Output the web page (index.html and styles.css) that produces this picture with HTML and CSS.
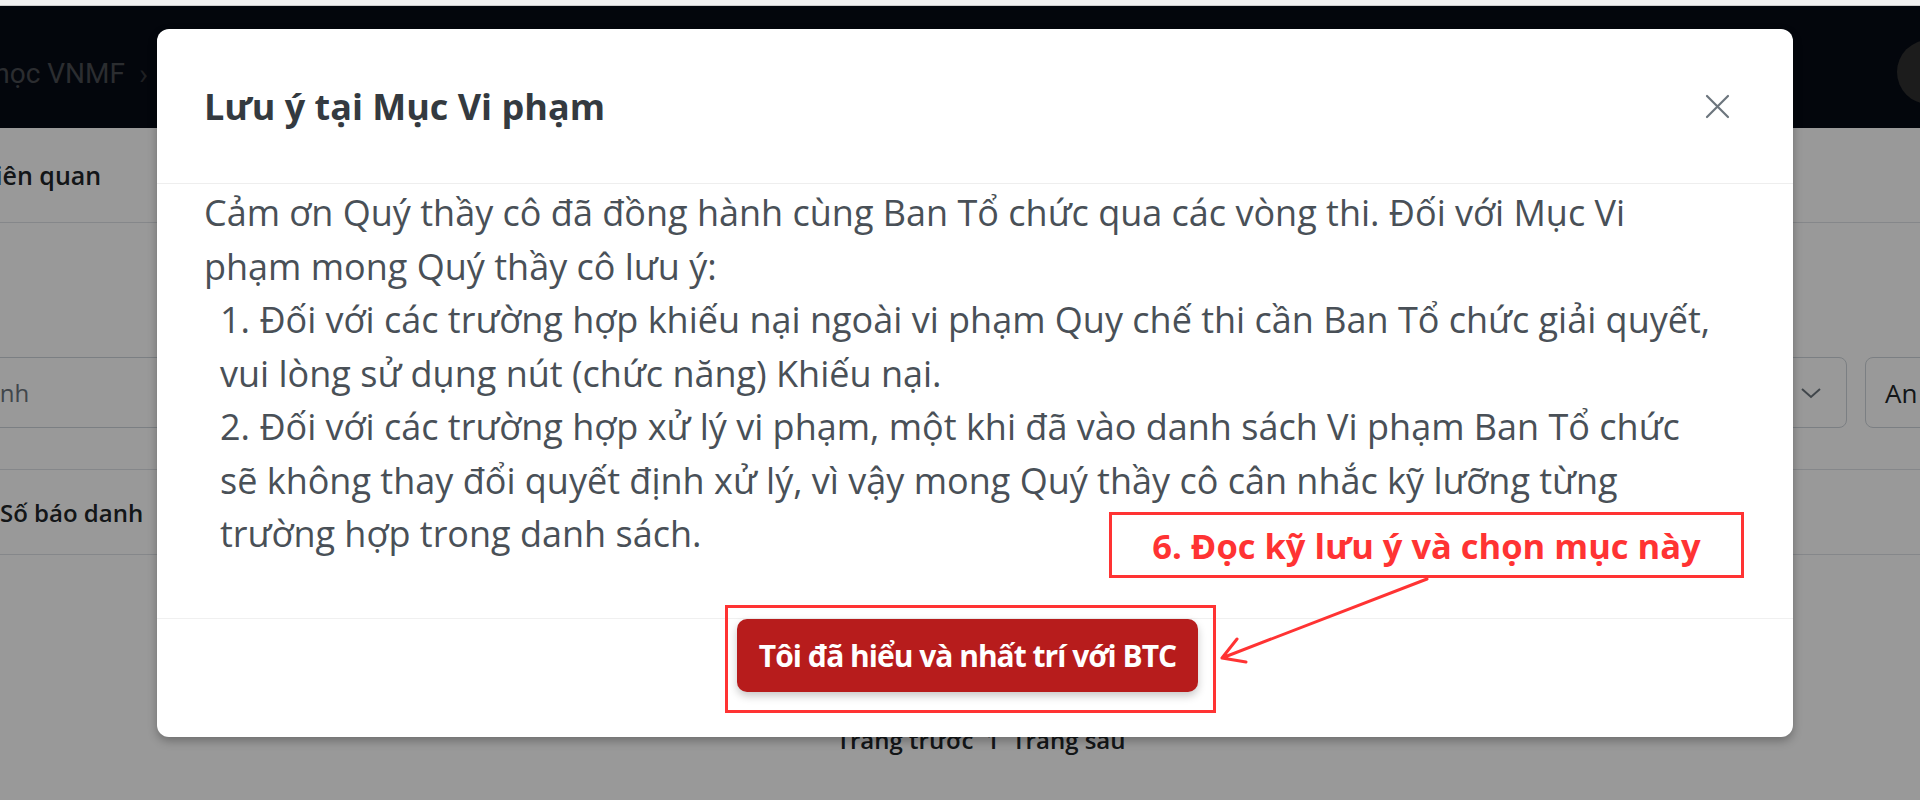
FILE: index.html
```html
<!DOCTYPE html>
<html lang="vi">
  <head>
    <meta charset="UTF-8" />
    <meta name="viewport" content="width=device-width, initial-scale=1.0" />
    <title>Danh sách Vi phạm</title>
    <link rel="stylesheet" href="styles.css">
  </head>
  <body>
    <div class="browser-bar"></div>

    <div class="app">
      <header class="topbar">
        <nav class="crumbs">
          <span>Kỳ thi Olympic Toán học VNMF</span>
          <span class="crumb-sep">›</span>
        </nav>
        <div class="avatar"></div>
      </header>

      <main class="content">
        <div class="tabs">
          <span class="tab">Liên quan</span>
        </div>

        <div class="filters">
          <div class="field search">Nhập số báo danh</div>
          <div class="field select">
            <svg width="22" height="12" viewBox="0 0 22 12">
              <polyline points="2,2 11,10 20,2" fill="none" stroke="#6c757d" stroke-width="2" />
            </svg>
          </div>
          <button class="btn-outline">An</button>
        </div>

        <div class="table-head">
          <span class="th">Số báo danh</span>
        </div>

        <div class="pager">Trang trước &nbsp;1&nbsp; Trang sau</div>
      </main>

      <div class="backdrop"></div>

      <div class="modal">
        <div class="modal-header">
          <h5 class="modal-title">Lưu ý tại Mục Vi phạm</h5>
          <button class="btn-close" aria-label="Close">
            <svg width="25" height="25" viewBox="0 0 25 25">
              <path d="M2 2 L23 23 M23 2 L2 23" stroke="#6c757d" stroke-width="2.2" stroke-linecap="round" />
            </svg>
          </button>
        </div>
        <div class="modal-body">
          <p>Cảm ơn Quý thầy cô đã đồng hành cùng Ban Tổ chức qua các vòng thi. Đối với Mục Vi<br>phạm mong Quý thầy cô lưu ý:</p>
          <div class="rules">
            <p>1. Đối với các trường hợp khiếu nại ngoài vi phạm Quy chế thi cần Ban Tổ chức giải quyết,<br>vui lòng sử dụng nút (chức năng) Khiếu nại.</p>
            <p>2. Đối với các trường hợp xử lý vi phạm, một khi đã vào danh sách Vi phạm Ban Tổ chức<br>sẽ không thay đổi quyết định xử lý, vì vậy mong Quý thầy cô cân nhắc kỹ lưỡng từng<br>trường hợp trong danh sách.</p>
          </div>
        </div>
        <div class="modal-footer">
          <button class="btn-agree">Tôi đã hiểu và nhất trí với BTC</button>
        </div>
      </div>

      <!-- chú thích hướng dẫn -->
      <div class="guide-label">6. Đọc kỹ lưu ý và chọn mục này</div>
      <div class="guide-frame"></div>
      <svg class="guide-arrow" width="250" height="110" viewBox="0 0 250 110">
        <path d="M227 13 L22 92 M22 92 L46 96 M22 92 L37 73" fill="none" stroke="#ff3333" stroke-width="3" stroke-linecap="round" />
      </svg>
    </div>
  </body>
</html>
```

FILE: styles.css
```css
* {
  box-sizing: border-box;
}

body {
  margin: 0;
  width: 1920px;
  height: 800px;
  overflow: hidden;
  font-family: "Open Sans", "Noto Sans", sans-serif;
  background: #fff;
}

.browser-bar {
  height: 6px;
  background: #f1f1f1;
  border-bottom: 1px solid #cdcdcd;
}

.app {
  position: relative;
  height: 794px;
  overflow: hidden;
}

/* top navigation */
.topbar {
  height: 122px;
  background: #050a15;
  display: flex;
  align-items: center;
  justify-content: space-between;
}

.crumbs {
  width: 148px;
  margin-top: 12px;
  overflow: hidden;
  display: flex;
  justify-content: flex-end;
  align-items: center;
  white-space: nowrap;
  font-family: Roboto, "Liberation Sans", sans-serif;
  font-size: 28px;
  color: #494b50;
}

.crumb-sep {
  margin-left: 14px;
  font-size: 30px;
  color: #34363a;
}

.avatar {
  width: 64px;
  height: 64px;
  margin-top: 10px;
  margin-right: -41px;
  border-radius: 50%;
  background: #2f2f2f;
}

/* page content behind the dialog */
.content {
  width: 2010px;
  margin-left: -24px;
  color: #212529;
}

.tabs {
  height: 95px;
  padding-left: 6px;
  display: flex;
  align-items: center;
  border-bottom: 1px solid #dee2e6;
}

.tab {
  font-size: 25px;
  font-weight: 600;
}

.filters {
  margin-top: 134px;
  height: 71px;
  display: flex;
  gap: 18px;
}

.field {
  border: 1px solid #ced4da;
  border-radius: 8px;
  display: flex;
  align-items: center;
}

.search {
  flex: 1;
  margin-left: -169px;
  padding-left: 16px;
  font-size: 24px;
  color: #6c757d;
}

.select {
  width: 250px;
  justify-content: flex-end;
  padding-right: 24px;
}

.btn-outline {
  width: 121px;
  border: 1px solid #ced4da;
  border-radius: 8px;
  background: #fff;
  padding: 0 0 0 19px;
  text-align: left;
  font-family: "Open Sans", sans-serif;
  font-size: 26px;
  color: #212529;
}

.table-head {
  margin-top: 41px;
  height: 86px;
  padding-left: 24px;
  display: flex;
  align-items: center;
  border-top: 1px solid #dee2e6;
  border-bottom: 1px solid #dee2e6;
}

.th {
  font-size: 24px;
  font-weight: 600;
}

.pager {
  margin-top: 168px;
  line-height: 34px;
  text-align: center;
  font-size: 24px;
  font-weight: 600;
}

.backdrop {
  position: absolute;
  inset: 0;
  background: rgba(0, 0, 0, 0.4);
}

/* dialog */
.modal {
  position: absolute;
  left: 157px;
  top: 23px;
  width: 1636px;
  background: #fff;
  border-radius: 12px;
  box-shadow: 0 4px 10px rgba(0, 0, 0, 0.28);
}

.modal-header {
  height: 155px;
  padding: 0 47px;
  display: flex;
  align-items: center;
  justify-content: space-between;
  border-bottom: 1px solid #eeeeee;
}

.modal-title {
  margin: 0;
  font-size: 36px;
  font-weight: 700;
  color: #343a40;
}

.btn-close {
  width: 41px;
  height: 41px;
  margin-right: 8px;
  padding: 0;
  border: none;
  background: transparent;
  display: flex;
  align-items: center;
  justify-content: center;
}

.modal-body {
  height: 434px;
  padding: 2px 47px 0;
  font-size: 36px;
  line-height: 53.5px;
  color: #495057;
  white-space: nowrap;
}

.modal-body p {
  margin: 0;
}

.rules {
  padding-left: 16px;
}

.modal-footer {
  height: 119px;
  border-top: 1px solid #f0f0f0;
  display: flex;
  justify-content: center;
  align-items: flex-start;
}

.btn-agree {
  width: 461px;
  height: 73px;
  margin-right: 15px;
  border: none;
  border-radius: 10px;
  background: #b71c1c;
  color: #fff;
  font-family: "Open Sans", sans-serif;
  font-size: 30px;
  font-weight: 700;
  letter-spacing: -1px;
  box-shadow: 0 4px 8px rgba(0, 0, 0, 0.22);
}

/* red guide marks drawn over the page */
.guide-label {
  position: absolute;
  left: 1109px;
  top: 506px;
  width: 635px;
  height: 66px;
  border: 3px solid #ff3333;
  background: #fff;
  display: flex;
  align-items: center;
  justify-content: center;
  font-size: 34.5px;
  font-weight: 700;
  color: #ff3333;
}

.guide-frame {
  position: absolute;
  left: 725px;
  top: 599px;
  width: 491px;
  height: 108px;
  border: 3px solid #ff3333;
}

.guide-arrow {
  position: absolute;
  left: 1200px;
  top: 560px;
}
```
